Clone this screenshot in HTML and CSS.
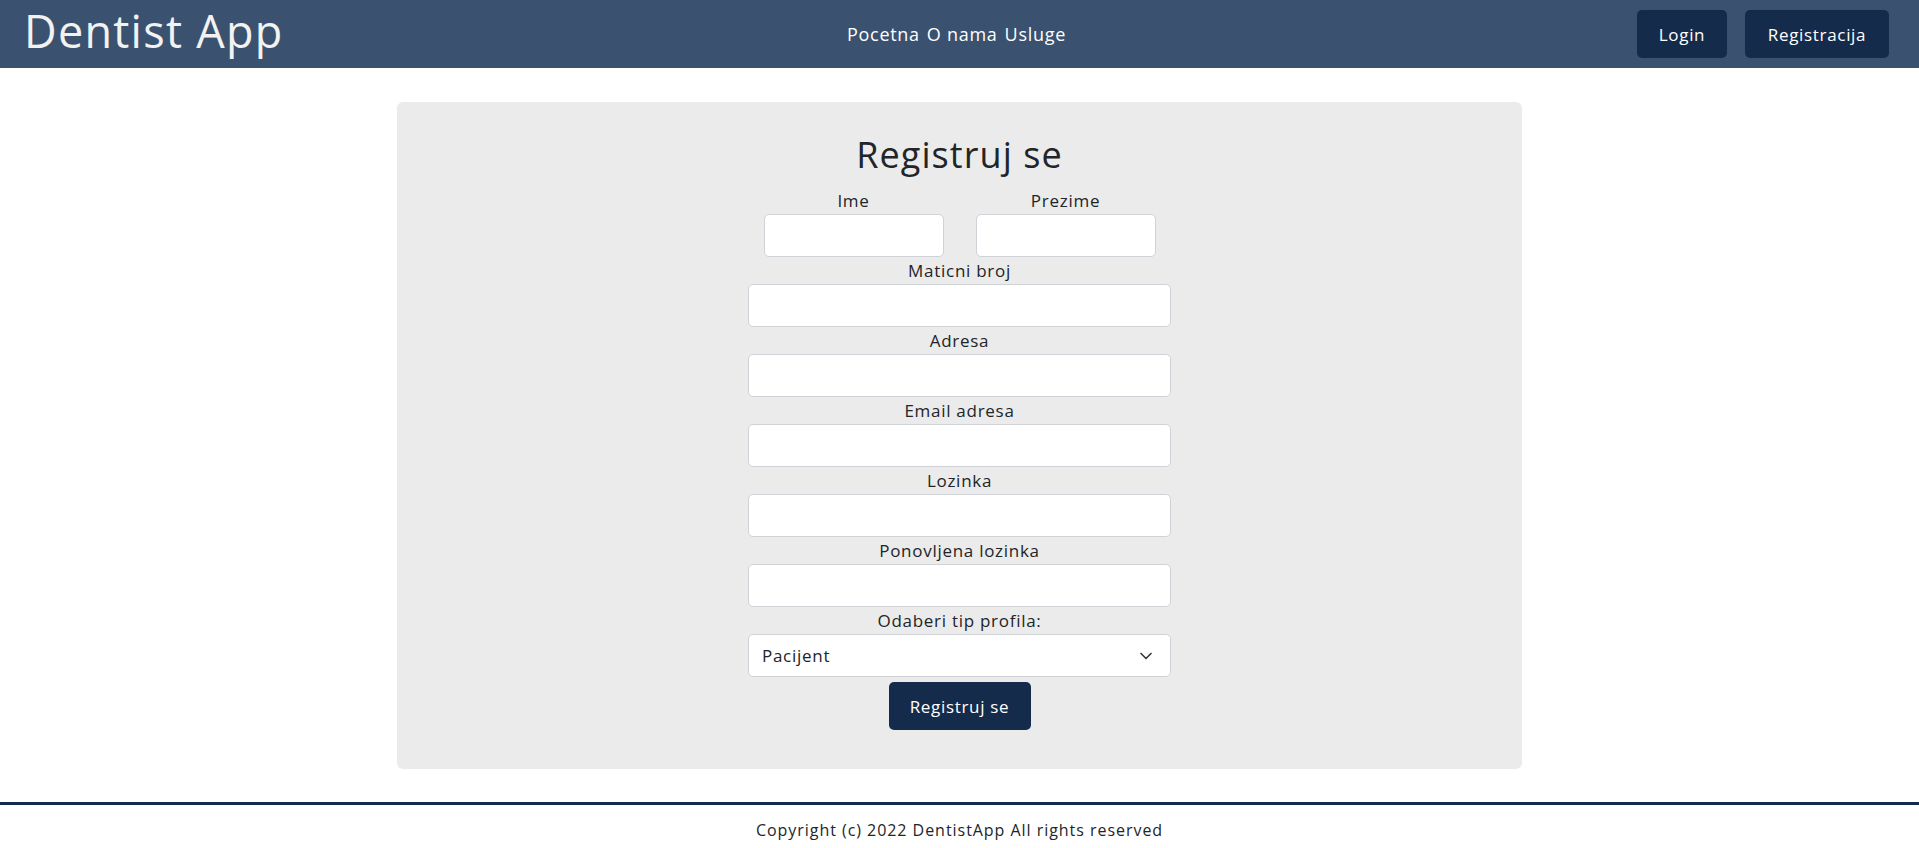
FILE: index.html
```html
<!DOCTYPE html>
<html lang="sr">
<head>
<meta charset="utf-8">
<title>Dentist App</title>
<link rel="stylesheet" href="styles.css">
</head>
<body>
<header class="topbar">
  <div class="brand">Dentist App</div>
  <nav class="nav">
    <a href="#">Pocetna</a>
    <a href="#">O nama</a>
    <a href="#">Usluge</a>
  </nav>
  <div class="actions">
    <button class="btn">Login</button>
    <button class="btn">Registracija</button>
  </div>
</header>

<main class="main">
  <section class="card">
    <h1 class="title">Registruj se</h1>
    <form class="form">
      <div class="row-two">
        <div class="field small">
          <label>Ime</label>
          <input type="text">
        </div>
        <div class="field small">
          <label>Prezime</label>
          <input type="text">
        </div>
      </div>
      <div class="field">
        <label>Maticni broj</label>
        <input type="text">
      </div>
      <div class="field">
        <label>Adresa</label>
        <input type="text">
      </div>
      <div class="field">
        <label>Email adresa</label>
        <input type="email">
      </div>
      <div class="field">
        <label>Lozinka</label>
        <input type="password">
      </div>
      <div class="field">
        <label>Ponovljena lozinka</label>
        <input type="password">
      </div>
      <div class="field">
        <label>Odaberi tip profila:</label>
        <div class="select">
          <span>Pacijent</span>
          <svg width="14" height="10" viewBox="0 0 16 12"><path d="M2 3l6 6 6-6" fill="none" stroke="#343a40" stroke-width="2" stroke-linecap="round" stroke-linejoin="round"/></svg>
        </div>
      </div>
      <button type="button" class="btn submit">Registruj se</button>
    </form>
  </section>
</main>

<footer class="footer">
  <p>Copyright (c) 2022 DentistApp All rights reserved</p>
</footer>
</body>
</html>
```

FILE: styles.css
```css
* { box-sizing: border-box; }
html, body { margin: 0; padding: 0; }
body {
  font-family: "Open Sans", "Noto Sans", sans-serif;
  color: #212529;
  background: #fff;
  letter-spacing: 0.045em;
}
.topbar {
  height: 68px;
  background: #3a5270;
  display: grid;
  grid-template-columns: 1fr auto 1fr;
  align-items: center;
  padding: 0 30px 0 24px;
}
.brand {
  font-size: 45px;
  color: #f2f2f2;
  line-height: 1;
  margin-top: -8px;
  letter-spacing: 0.028em;
}
.nav {
  display: flex;
  gap: 7px;
}
.nav a {
  color: #fff;
  text-decoration: none;
  font-size: 18px;
}
.actions {
  display: flex;
  justify-content: flex-end;
  gap: 18px;
}
.btn {
  font-family: inherit;
  letter-spacing: 0.04em;
  background: #152b4b;
  color: #fff;
  border: none;
  border-radius: 5px;
  height: 48px;
  font-size: 17px;
  padding: 0 16px;
}
.actions .btn:first-child { width: 90px; }
.actions .btn:last-child { width: 144px; }
.main {
  padding-top: 34px;
  display: flex;
  justify-content: center;
}
.card {
  width: 1125px;
  background: #ebebeb;
  border-radius: 6px;
  padding: 31px 0 39px;
  display: flex;
  flex-direction: column;
  align-items: center;
}
.title {
  margin: 0 0 11px;
  font-size: 36px;
  line-height: 43px;
  font-weight: 400;
  letter-spacing: 0.03em;
}
.form {
  display: flex;
  flex-direction: column;
  align-items: center;
}
.row-two {
  display: flex;
  gap: 32px;
}
.field {
  display: flex;
  flex-direction: column;
  align-items: center;
  width: 423px;
}
.field.small { width: 180px; }
.field label {
  font-size: 17px;
  line-height: 27px;
}
.field input, .select {
  width: 100%;
  height: 43px;
  background: #fff;
  border: 1px solid #cfd3d8;
  border-radius: 5px;
}
.select {
  display: flex;
  align-items: center;
  justify-content: space-between;
  padding: 0 17px 0 13px;
  font-size: 17px;
}
.submit {
  margin-top: 5px;
  width: 142px;
  padding: 0;
}
.footer {
  margin-top: 33px;
  border-top: 3px solid #152b4b;
  text-align: center;
}
.footer p {
  margin: 0;
  padding-top: 14px;
  font-size: 16px;
  line-height: 22px;
  letter-spacing: 0.06em;
}
```
